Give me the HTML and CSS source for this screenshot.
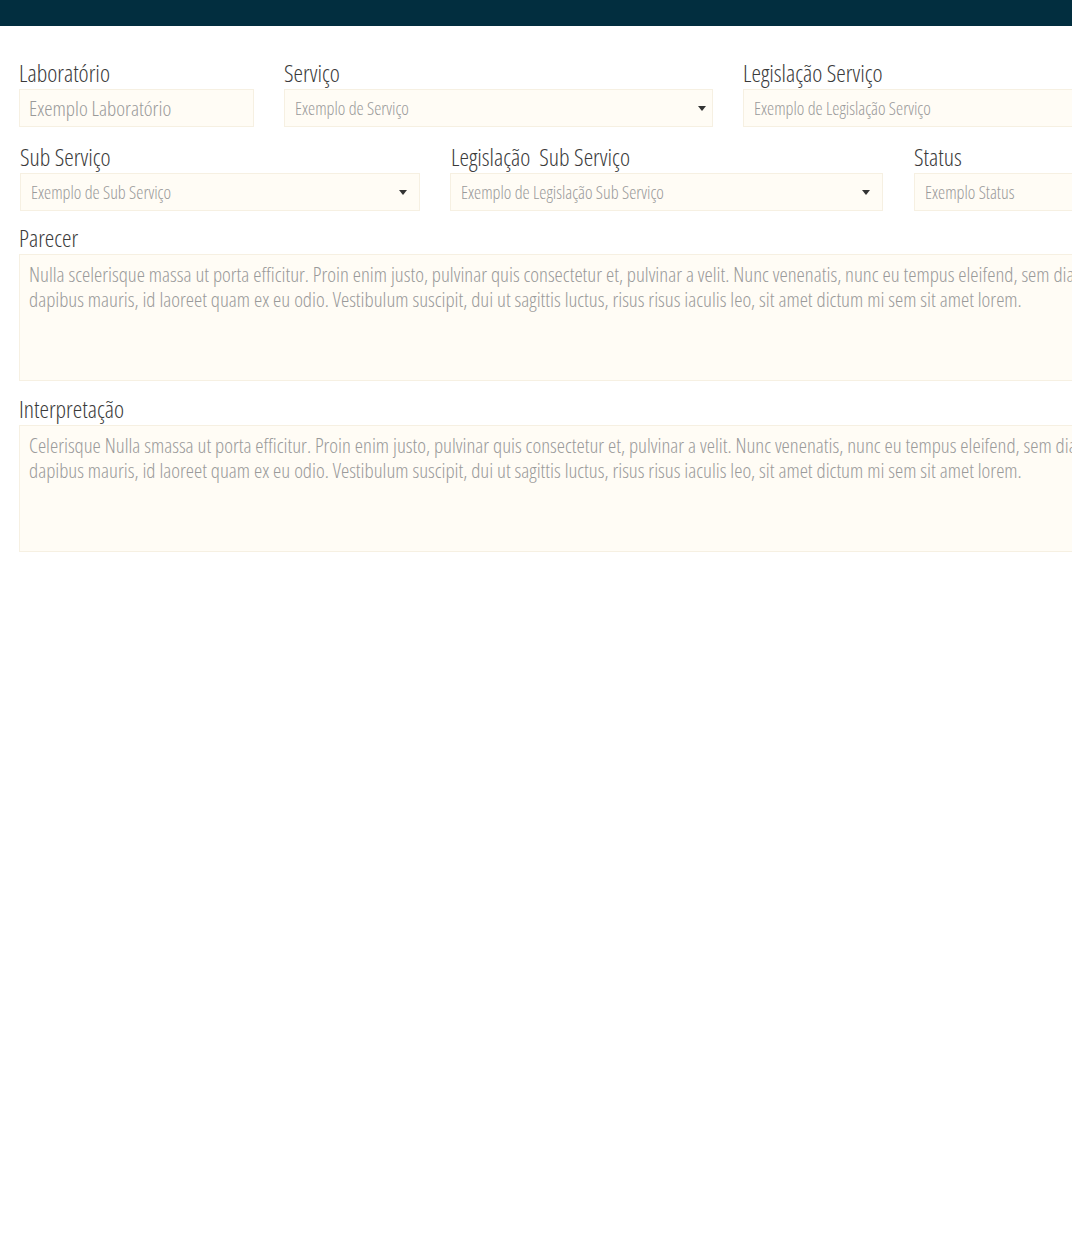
FILE: index.html
```html
<!DOCTYPE html>
<html lang="pt-BR">
<head>
<meta charset="utf-8">
<title>Formulário</title>
<link rel="stylesheet" href="styles.css">
</head>
<body>
<header class="topbar"></header>
<main class="form">
  <div class="row row-1">
    <div class="field w-lab">
      <label class="label">Laboratório</label>
      <div class="box big">Exemplo Laboratório</div>
    </div>
    <div class="field w-serv">
      <label class="label">Serviço</label>
      <div class="box select">Exemplo de Serviço<span class="caret caret-near"></span></div>
    </div>
    <div class="field w-leg">
      <label class="label">Legislação Serviço</label>
      <div class="box">Exemplo de Legislação Serviço</div>
    </div>
  </div>
  <div class="row row-2">
    <div class="field w-sub">
      <label class="label">Sub Serviço</label>
      <div class="box select">Exemplo de Sub Serviço<span class="caret"></span></div>
    </div>
    <div class="field w-legsub">
      <label class="label">Legislação&nbsp; Sub Serviço</label>
      <div class="box select">Exemplo de Legislação Sub Serviço<span class="caret"></span></div>
    </div>
    <div class="field w-status">
      <label class="label">Status</label>
      <div class="box">Exemplo Status</div>
    </div>
  </div>
  <div class="block">
    <label class="label">Parecer</label>
    <div class="area">Nulla scelerisque massa ut porta efficitur. Proin enim justo, pulvinar quis consectetur et, pulvinar a velit. Nunc venenatis, nunc eu tempus eleifend, sem diam dapibus mauris, id laoreet quam ex eu odio. Vestibulum suscipit, dui ut sagittis luctus, risus risus iaculis leo, sit amet dictum mi sem sit amet lorem.</div>
  </div>
  <div class="block">
    <label class="label">Interpretação</label>
    <div class="area">Celerisque Nulla smassa ut porta efficitur. Proin enim justo, pulvinar quis consectetur et, pulvinar a velit. Nunc venenatis, nunc eu tempus eleifend, sem diam dapibus mauris, id laoreet quam ex eu odio. Vestibulum suscipit, dui ut sagittis luctus, risus risus iaculis leo, sit amet dictum mi sem sit amet lorem.</div>
  </div>
</main>
</body>
</html>
```
FILE: styles.css
```css
html, body {
  margin: 0;
  padding: 0;
  background: #ffffff;
  overflow: hidden;
}
body {
  font-family: "Open Sans", "Liberation Sans", sans-serif;
  font-stretch: 75%;
  font-weight: 300;
  color: #3a3a3a;
}
.topbar {
  height: 26px;
  background: #022e3f;
}
.form {
  padding: 35px 0 0 19px;
  width: 1160px;
}
.row {
  display: flex;
  gap: 30px;
  margin-bottom: 18px;
}
.row-2 {
  padding-left: 1px;
  margin-bottom: 15px;
}
.row-2 .w-status { margin-left: 1px; }
.row-2 .w-legsub .label { padding-left: 1px; }
.field {
  display: flex;
  flex-direction: column;
  flex: none;
}
.w-lab { width: 235px; }
.w-serv { width: 429px; }
.w-leg { width: 360px; }
.w-sub { width: 400px; }
.w-legsub { width: 433px; }
.w-status { width: 200px; }
.label {
  display: block;
  font-size: 24px;
  line-height: 24px;
  height: 24px;
  margin-bottom: 4px;
  color: #3a3a3a;
}
.box {
  box-sizing: border-box;
  height: 38px;
  background: #fffcf5;
  border: 1px solid #f6f0e2;
  color: #9a9a9a;
  font-size: 18px;
  line-height: 36px;
  padding: 0 10px;
  position: relative;
  white-space: nowrap;
}
.box.big {
  font-size: 21px;
  padding-left: 9px;
}
.caret {
  position: absolute;
  right: 12px;
  top: 16px;
  width: 0;
  height: 0;
  border-left: 4px solid transparent;
  border-right: 4px solid transparent;
  border-top: 5px solid #333333;
}
.caret-near {
  right: 6px;
}
.block {
  margin-bottom: 16px;
}
.area {
  box-sizing: border-box;
  width: 1110px;
  height: 127px;
  background: #fffcf5;
  border: 1px solid #f6f0e2;
  color: #9a9a9a;
  font-size: 20.85px;
  line-height: 25px;
  padding: 7px 9px;
}
```
